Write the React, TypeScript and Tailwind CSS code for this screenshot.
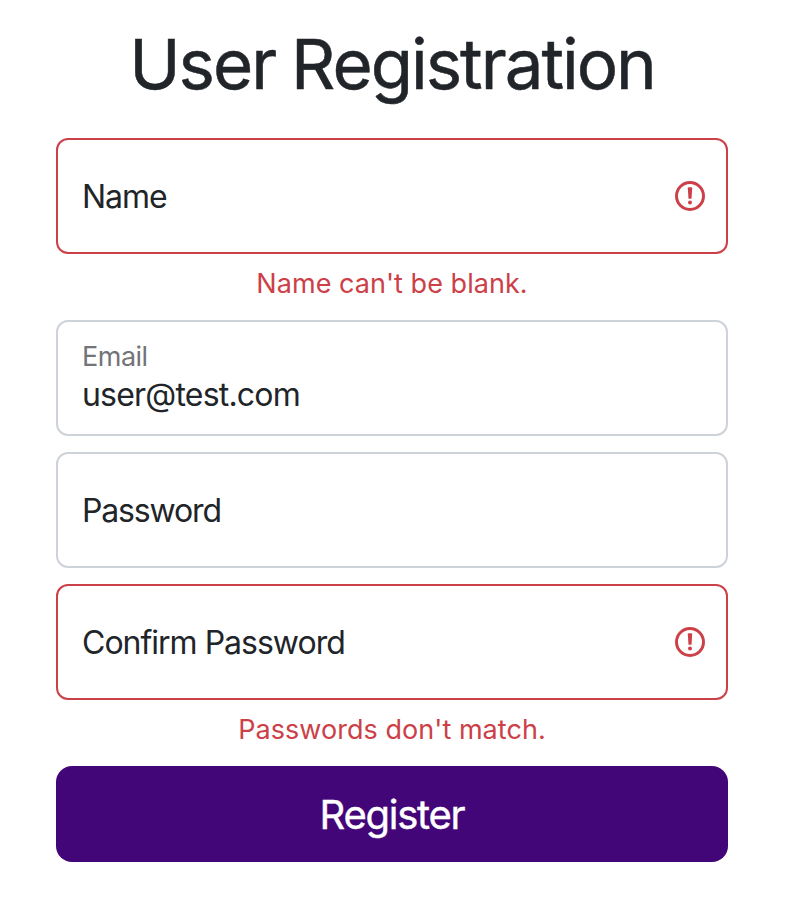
import React from 'react';

function ErrorIcon() {
  return (
    <svg className="h-8 w-8 shrink-0" viewBox="0 0 32 32" fill="#cc4048" aria-hidden="true">
      <circle cx="16" cy="16" r="13.5" fill="none" stroke="#cc4048" strokeWidth="3" />
      <path d="M13.8 8.2Q13.8 7.2 14.8 7.2H17.2Q18.2 7.2 18.2 8.2L17.5 18.8H14.5Z" />
      <circle cx="16" cy="22.5" r="2" />
    </svg>
  );
}

type FieldProps = { label: string; tracking: string; invalid?: boolean };

function Field({ label, tracking, invalid = false }: FieldProps) {
  return (
    <div className={`flex h-[116px] items-center justify-between rounded-xl border-2 pr-5 pl-6 ${invalid ? 'border-[#cc4048]' : 'border-[#ced3d9]'}`}>
      <span className={`pt-0.5 text-[32px] leading-10 ${tracking}`}>{label}</span>
      {invalid && <ErrorIcon />}
    </div>
  );
}

function ErrorMessage({ children }: { children: string }) {
  return (
    <p className="h-[66px] pt-3 text-center text-[27px] leading-9 tracking-[0.04px] text-[#cc4048]">{children}</p>
  );
}

export default function App() {
  return (
    <main className="h-[910px] bg-white pt-[29px] pr-[58px] pl-14 font-['Inter',sans-serif] text-[#212529]">
      <h1 className="h-[109px] text-center text-[69px] leading-[70px] tracking-[-2px] whitespace-nowrap [word-spacing:-1.5px] [-webkit-text-stroke:0.5px_#212529]">User Registration</h1>
      <form>
        <Field label="Name" tracking="tracking-[-1px]" invalid />
        <ErrorMessage>Name can't be blank.</ErrorMessage>
        <div className="h-[116px] rounded-xl border-2 border-[#ced3d9] pt-[17px] pl-6">
          <div className="text-[27px] leading-9 tracking-[-0.5px] text-[#727478]">Email</div>
          <div className="text-[32px] leading-10 tracking-[-0.8px]">user@test.com</div>
        </div>
        <div className="mt-4 flex flex-col gap-4">
          <Field label="Password" tracking="tracking-[-1.15px]" />
          <Field label="Confirm Password" tracking="tracking-[-1px]" invalid />
        </div>
        <ErrorMessage>Passwords don't match.</ErrorMessage>
        <button type="button" className="h-24 w-full rounded-2xl bg-[#430679] pt-0.5 text-[40px] tracking-[-1.25px] text-white [-webkit-text-stroke:0.4px_white]">Register</button>
      </form>
    </main>
  );
}
